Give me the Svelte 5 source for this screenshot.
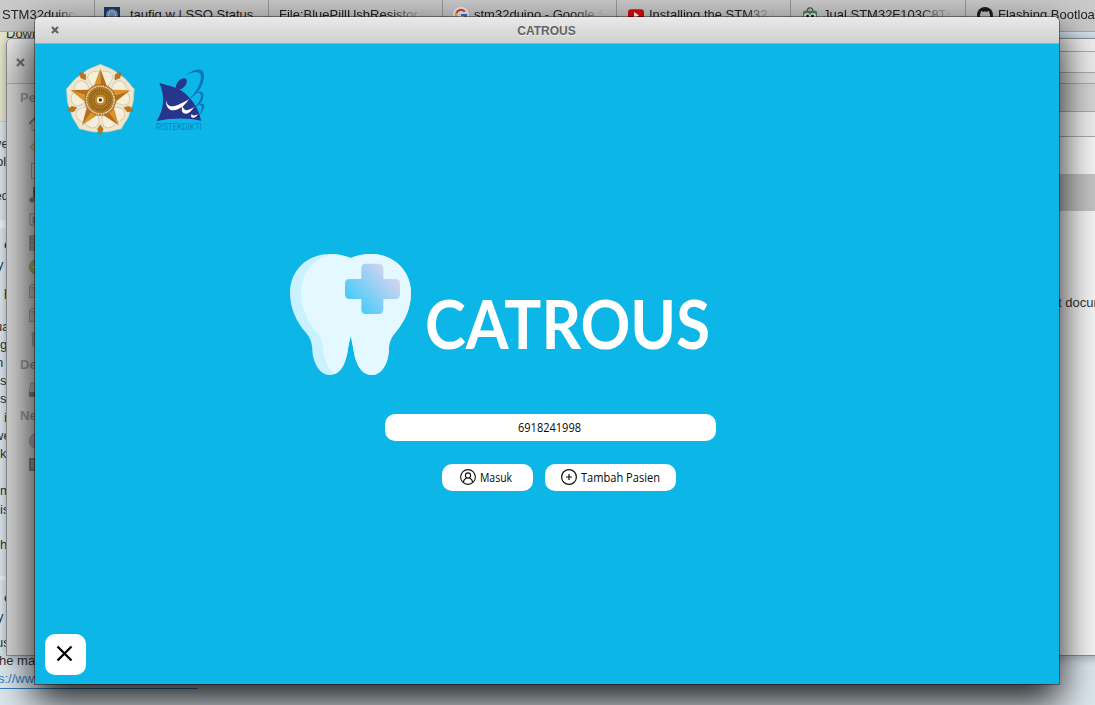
<script>
  const tabs = [
    { w: 95, pad: 2, icon: '', text: 'STM32duino', len: 74 },
    { w: 174, pad: 9, icon: 'sso', text: 'taufiq.w | SSO Status', len: 132 },
    { w: 173, pad: 9, icon: '', text: 'File:BluePillUsbResistor.jpg', len: 146 },
    { w: 173, pad: 9, icon: 'google', text: 'stm32duino - Google Search', len: 130 },
    { w: 173, pad: 10, icon: 'youtube', text: 'Installing the STM32 Library', len: 126 },
    { w: 174, pad: 10, icon: 'shop', text: 'Jual STM32F103C8T6 Board', len: 128 },
    { w: 174, pad: 10, icon: 'github', text: 'Flashing Bootloader', len: 150 }
  ];
  const lines = [
    { h: 30, t: 've', x: -5 }, { h: 18, t: 'ol', x: -4 }, { h: 34, t: 'ed', x: -5, c: 'small' },
    { h: 49, t: 'c', x: 4, c: 'bold' }, { h: 20, t: 'y', x: -3 }, { h: 27, t: 'p', x: 4 },
    { h: 35, t: 'ua', x: -5 }, { h: 18, t: 'g', x: 0 }, { h: 18, t: 'n', x: -4 },
    { h: 18, t: 's', x: 0 }, { h: 18, t: 's', x: 0 }, { h: 19, t: 'i', x: 4 },
    { h: 18, t: 'we', x: -6 }, { h: 18, t: 'k', x: 0 }, { h: 37, t: 'm', x: 0 },
    { h: 19, t: 'is', x: 0 }, { h: 35, t: 'he', x: 0 }, { h: 53, t: 'c', x: 4, c: 'bold' },
    { h: 19, t: 'y', x: -3 }, { h: 26, t: 'us', x: -4 }, { h: 18, t: 'he main', x: -1 },
    { h: 18, t: 's://www', x: -2, c: 'link' }
  ];
  const places = ['home', 'folder', 'doc', 'music', 'photo', 'film', 'down', 'box', 'box', 'trash'];
  const spokes = [0, 72, 144, 216, 288];
</script>

{#snippet fit(text, width, size, weight)}
  <svg class="fit" {width} height={Math.round(size * 1.3)} style:font-size="{size}px" style:font-weight={weight}>
    <text x="0" y={size} textLength={width} lengthAdjust="spacingAndGlyphs">{text}</text>
  </svg>
{/snippet}

{#snippet favicon(name)}
  <svg class="fav" viewBox="0 0 16 16">
    {#if name === 'sso'}
      <rect width="16" height="16" fill="#123e6c" /><circle cx="8" cy="8" r="6" fill="#7892b2" />
      <circle cx="8" cy="8" r="3.5" fill="none" stroke="#d5dce8" stroke-dasharray="2 1" />
    {:else if name === 'google'}
      <circle cx="8" cy="8" r="8" fill="#eee" />
      <path d="M3.4 6A5 5 0 0 1 11.8 4.6" fill="none" stroke="#dc4437" stroke-width="2.2" />
      <path d="M3.4 6A5 5 0 0 0 4 11" fill="none" stroke="#e9b32d" stroke-width="2.2" />
      <path d="M8 8H13A5 5 0 0 1 11 12" fill="none" stroke="#3774d9" stroke-width="2.2" />
    {:else if name === 'youtube'}
      <rect y="2.3" width="16" height="12" rx="3" fill="#e00909" /><path d="M6 5L11 8.3L6 11.6Z" fill="#fff" />
    {:else if name === 'shop'}
      <path d="M5 5C5-.5 11-.5 11 5" fill="none" stroke="#555" stroke-width="1.4" />
      <rect x="1" y="3.7" width="14" height="12" rx="1.5" fill="#4a8a4d" />
      <circle cx="5" cy="9" r="3" fill="#eee" /><circle cx="11" cy="9" r="3" fill="#eee" />
      <circle cx="5.5" cy="9" r="1.5" fill="#222" /><circle cx="10.5" cy="9" r="1.5" fill="#222" />
    {:else}
      <circle cx="8" cy="8" r="8" fill="#1d1d1d" />
      <path d="M4 4L6 4.8Q8 4.3 10 4.8L12 4Q12.6 5 12.3 6C15 10 11 12 8 12C5 12 1 10 3.7 6Q3.4 5 4 4Z" fill="#c4c4c4" />
    {/if}
  </svg>
{/snippet}

<div class="desktop">
  <section class="browser">
    <nav class="tabs">
      {#each tabs as tab}
        <div class="tab" style:width="{tab.w}px" style:padding-left="{tab.pad}px">
          {#if tab.icon}{@render favicon(tab.icon)}{/if}
          <span style:width="{tab.len}px">{tab.text}</span>
        </div>
      {/each}
    </nav>
    <div class="notice">Download</div>
    <div class="article">
      {#each lines as l}
        <div class="line {l.c ?? ''}" style:height="{l.h}px" style:margin-left="{l.x}px">{l.t}</div>
      {/each}
      <div class="rule"></div>
    </div>
  </section>

  <section class="files">
    <aside>
      <header><svg width="9" height="9" viewBox="0 0 9 9"><path d="M1 1L8 8M8 1L1 8" stroke="#747474" stroke-width="2.2" /></svg></header>
      <h4>Personal</h4>
      {#each places as p}
        <div class="place">
          <svg width="16" height="16" viewBox="0 0 16 16" fill="none" stroke="#8b8b8b">
            {#if p === 'home'}<path d="M0 9L8 1L16 9" stroke="#865d55" stroke-width="2" /><path d="M3 8V15H13V8" />
            {:else if p === 'folder'}<path d="M1 8L8 2L15 8L8 14Z" fill="#d4bb74" stroke="#9c8956" />
            {:else if p === 'doc'}<rect x="2.5" y=".5" width="12" height="15" />
            {:else if p === 'music'}<path d="M5 13V1L14 3" stroke="#555" stroke-width="2" /><circle cx="3" cy="13" r="2.5" fill="#555" />
            {:else if p === 'photo'}<rect x="1" y="3" width="14" height="11" stroke="#887f70" /><rect x="4" y="6" width="9" height="6" fill="#6d8494" />
            {:else if p === 'film'}<rect x="1" y="1" width="14" height="14" fill="#888" stroke="#555" /><path d="M3 1V15" stroke="#ccc" stroke-dasharray="2 2" />
            {:else if p === 'down'}<circle cx="8" cy="8" r="7.5" fill="#74b344" stroke="#678b50" /><path d="M4 8H12" stroke="#eee" stroke-width="2" />
            {:else if p === 'box'}<path d="M.5 4L2 1.5H14V14.5H.5Z" fill="#cdbda0" stroke="#998b77" /><path d="M1 5H15" />
            {:else}<path d="M3 2H14V15H4Z" fill="#9f9f9f" />{/if}
          </svg>
        </div>
      {/each}
      <h4 class="dev">Devices</h4>
      <div class="place"><svg width="16" height="16" viewBox="0 0 16 16"><path d="M2 1H14L16 11H0Z" fill="#bbb" stroke="#888" /><rect y="10" width="16" height="5" fill="#606060" /></svg></div>
      <h4 class="net">Network</h4>
      <div class="place"><svg width="16" height="16" viewBox="0 0 16 16"><circle cx="8" cy="8" r="7.5" fill="#b095cc" stroke="#80748b" /></svg></div>
      <div class="place"><svg width="16" height="16" viewBox="0 0 16 16"><rect x="1" y="2" width="15" height="11" fill="#888" stroke="#4e4e4e" stroke-width="1.6" /></svg></div>
    </aside>
    <div class="pane">
      <div class="r1"></div><div class="r2"></div><div class="r3"></div><div class="r4"></div>
      <div class="r5"></div><div class="r6"></div><div class="r7"></div>
      <p>t document</p>
    </div>
  </section>

  <main class="window">
    <header class="titlebar">
      <svg width="8" height="8" viewBox="0 0 8 8"><path d="M1 1L7 7M7 1L1 7" stroke="#606060" stroke-width="2.1" /></svg>
      <h1>CATROUS</h1>
    </header>
    <div class="content">
      <svg class="logos" width="150" height="72" viewBox="30 26 450 216">
        <g>
          {#each spokes as a}
            <g transform="rotate({a} 136 134)">
              <path d="M136 134L82 74C76 44 110 40 136 27C162 40 196 44 190 74Z" fill="#efe6cd" stroke="#d5caab" stroke-width="2" stroke-linejoin="round" />
              <path d="M117 92C89 80 93 48 123 48C130 48 133 52 136 52C139 52 142 48 149 48C179 48 183 80 155 92" fill="#f5eedb" stroke="#d6ccb0" stroke-width="3" />
            </g>
          {/each}
          {#each spokes as a}
            <path transform="rotate({a} 136 134)" d="M136 238L127 222L136 208L145 222Z" fill="#bd7414" stroke="#a65e18" />
          {/each}
          {#each spokes as a}
            <g transform="rotate({a} 136 134)">
              <path d="M136 40L113 102L136 120Z" fill="#d6942a" /><path d="M136 40L159 102L136 120Z" fill="#b86d16" />
            </g>
          {/each}
          <circle cx="136" cy="134" r="47" fill="#a65f16" /><circle cx="136" cy="134" r="42" fill="#b27d25" stroke="#f3e5c5" stroke-width="5" stroke-dasharray="3 2" />
          <circle cx="136" cy="134" r="29" fill="none" stroke="#8c5c1c" stroke-width="11" stroke-dasharray="3 3" />
          <circle cx="136" cy="134" r="19" fill="#c08829" stroke="#764710" stroke-width="3" stroke-dasharray="4 2" />
          <circle cx="136" cy="134" r="10" fill="#fff4db" /><circle cx="136" cy="134" r="5" fill="#54301c" />
        </g>
        <g>
          <path d="M313 82C341 92 367 94 388 112C410 132 432 157 438 196C397 187 350 188 305 197C326 163 332 126 313 82Z" fill="#27358c" />
          <ellipse cx="379" cy="86" rx="12" ry="21" transform="rotate(42 379 86)" fill="#27358c" />
          <path d="M391 62C418 36 447 36 447 61C446 93 427 117 399 133C424 112 438 86 438 62C436 44 412 48 391 62Z" fill="#0a72b8" />
          <path d="M421 114C437 103 449 111 444 128C439 144 427 154 414 160C429 147 438 134 438 122C438 112 430 111 421 114M432 148C445 140 451 148 446 160C442 170 437 176 432 178C439 168 441 161 440 154C439 149 436 148 432 148" fill="#0a72b8" />
          <path d="M333 134C335 149 345 156 359 152C374 149 388 139 402 132C389 151 373 164 356 165C340 166 332 151 333 134ZM383 151C385 164 394 168 407 161L417 155C408 170 397 178 387 174C379 170 379 160 383 151ZM410 175C413 182 420 182 429 177C423 187 414 190 408 184Z" fill="#fff" />
          <text x="303" y="224" font-family="Roboto" font-weight="300" font-size="27" textLength="137" lengthAdjust="spacingAndGlyphs" fill="#0a6cb2">RISTEKDIKTI</text>
        </g>
      </svg>

      <div class="brand">
        <svg width="121" height="121" viewBox="30 42 363 363">
          <defs>
            <linearGradient id="plus" x1="215" y1="205" x2="340" y2="90" gradientUnits="userSpaceOnUse">
              <stop stop-color="#3bcbfb" /><stop offset="1" stop-color="#e0d4ee" />
            </linearGradient>
          </defs>
          <path d="M212 54C190 46 168 42 148 42C82 42 30 92 30 158C30 205 50 246 77 277C92 295 96 310 97 330C99 371 121 405 148 405C181 405 196 374 203 333C206 314 208 304 212 288C216 304 218 314 221 333C228 374 244 405 277 405C305 405 327 370 327 322C328 302 337 288 348 275C376 242 393 205 393 157C393 92 340 42 275 42C252 42 232 46 212 54Z" fill="#caf1fe" />
          <path d="M212 54C196 48 180 44 165 43C105 48 63 96 63 158C63 205 83 246 110 277C124 294 129 310 130 330C132 362 145 390 165 402C186 393 197 368 203 333C206 314 208 304 212 288C216 304 218 314 221 333C228 374 244 405 277 405C305 405 327 370 327 322C328 302 337 288 348 275C376 242 393 205 393 157C393 92 340 42 275 42C252 42 232 46 212 54Z" fill="#e4f8ff" />
          <path d="M258 71H296Q310 71 310 85V117H346Q360 117 360 131V163Q360 177 346 177H310V208Q310 222 296 222H258Q244 222 244 208V177H209Q195 177 195 163V131Q195 117 209 117H244V85Q244 71 258 71Z" fill="url(#plus)" />
        </svg>
        {@render fit('CATROUS', 285, 67, 700)}
      </div>

      <div class="field">{@render fit('6918241998', 63, 12, 500)}</div>

      <div class="actions">
        <button class="login">
          <svg width="16" height="16" viewBox="0 0 16 16" fill="none" stroke="#111" stroke-width="1.1">
            <circle cx="8" cy="8" r="7.4" /><circle cx="8" cy="6.5" r="2.6" /><path d="M3.5 13.2C3.5 10.6 4.8 9.8 6.5 9M9.5 9C11.2 9.8 12.5 10.6 12.5 13.2" />
          </svg>
          {@render fit('Masuk', 32, 12, 500)}
        </button>
        <button class="add">
          <svg width="16" height="16" viewBox="0 0 16 16" fill="none" stroke="#111" stroke-width="1.2">
            <circle cx="8" cy="8" r="7.4" /><path d="M8 5V11M5 8H11" />
          </svg>
          {@render fit('Tambah Pasien', 79, 12, 500)}
        </button>
      </div>

      <button class="quit" aria-label="Close">
        <svg width="17" height="17" viewBox="0 0 17 17"><path d="M1.5 1.5L15.5 15.5M15.5 1.5L1.5 15.5" stroke="#000" stroke-width="2.3" /></svg>
      </button>
    </div>
  </main>
</div>

<style>
  * { box-sizing: border-box; }
  svg { display: block; flex: none; }
  .desktop { position: relative; width: 1095px; height: 705px; overflow: hidden; background: #dce7ef; font-family: "Liberation Sans", sans-serif; font-size: 13px; color: #333; }
  .browser { position: absolute; inset: 0; }
  .tabs { display: flex; height: 32px; background: #cacaca; border-bottom: 1px solid #aaa; overflow: hidden; }
  .tab { display: flex; flex: 0 0 auto; height: 31px; gap: 10px; border-right: 1px solid #999; align-items: center; color: #222; }
  .tab:not(:first-child) { margin-right: 1px; }
  .tab span { overflow: hidden; white-space: nowrap; height: 15px; line-height: 15px; mask-image: linear-gradient(90deg, #000 75%, transparent); margin-top: -3px; }
  .tab:nth-child(2) span { mask-image: none; }
  .fav { width: 16px; height: 16px; margin-top: -1px; margin-right: -5px; }
  .tab:nth-child(2) .fav { margin-right: 0; }
  .notice { height: 90px; padding: 0 0 0 6px; line-height: 4px; background: linear-gradient(90deg, #e9e8cf 0 100px, #d8e5ee 100px); border-bottom: 1px solid #d5d1b0; overflow: hidden; }
  .article { height: 583px; background: linear-gradient(#dde6ee 0 98px, #f4f4f4 98px 106px, #dce8ee 106px 454px, #f2f2f2 454px 458px, #dde7ee 458px); }
  .line { display: flex; align-items: flex-end; line-height: 16px; white-space: nowrap; }
  .small { font-size: 12px; }
  .bold { font-weight: 700; color: #164371; }
  .link { color: #347fc4; }
  .rule { width: 198px; height: 1px; background: #347fc4; margin-top: 1px; }
  .files { position: absolute; left: 6px; top: 38px; width: 1100px; height: 618px; display: flex; justify-content: space-between; background: #eee; border: 1px solid #8b8f92; border-radius: 6px 6px 0 0; box-shadow: 0 2px 10px #0004; overflow: hidden; }
  aside { width: 100px; background: #d6d6d6; }
  aside header { height: 45px; padding: 19px 0 0 9px; background: linear-gradient(#eee, #d2d2d2); border-bottom: 1px solid #aaa; }
  h4 { margin: 0; padding-left: 13px; height: 26px; line-height: 27px; font-size: 13px; color: #989898; }
  .place { height: 24px; padding: 5px 0 0 22px; }
  .place svg { opacity: .7; }
  .dev { margin-top: 1px; }
  .net { margin-top: 1px; }
  .pane { width: 70px; background: #f5f5f5; padding: 0; }
  .pane div { border-bottom: 1px solid #aaa; }
  .pane .r1 { height: 13px; background: #eee; }
  .pane .r2 { height: 21px; background: #ececec; }
  .pane .r3 { height: 11px; background: #ddd; }
  .pane .r4 { height: 28px; background: #d5d5d5; }
  .pane .r5 { height: 25px; background: #eee; }
  .pane .r6 { height: 37px; border: 0; }
  .pane .r7 { height: 37px; background: #c4c4c4; border: 0; }
  p { margin: 84px 0 0 23px; line-height: 16px; white-space: nowrap; }
  .window { position: absolute; left: 35px; top: 17px; width: 1024px; height: 667px; border-radius: 5px 5px 0 0; box-shadow: 0 0 0 1px #0006, 0 16px 38px 2px #000d; }
  .titlebar { display: grid; grid-template-columns: 32px 1fr 33px; align-items: center; height: 27px; padding-bottom: 1px; background: linear-gradient(#e9e9e9, #d0d0d0); border-bottom: 1px solid #aaa; border-radius: 5px 5px 0 0; }
  .titlebar svg { margin-left: 16px; }
  h1 { margin: 0; padding-top: 2px; font-size: 12px; line-height: 16px; color: #636363; text-align: center; text-shadow: 0 1px #eee; }
  .content { display: flex; flex-direction: column; height: 640px; background: #0cb6e6; }
  .logos { margin: 20px 0 0 30px; }
  .brand { display: flex; margin: 118px 0 0 255px; height: 121px; }
  .fit { font-family: Lato, "Open Sans", sans-serif; fill: #080808; overflow: visible; }
  .brand .fit { fill: #fff; margin: 28px 0 0 14px; }
  .field { display: flex; justify-content: center; width: 331px; height: 27px; margin: 39px 0 0 350px; padding: 6px 2px 0 0; background: #fff; border-radius: 10px; }
  .field .fit, button .fit { font-family: "Open Sans", sans-serif; }
  .actions { display: flex; gap: 12px; margin: 23px 0 0 407px; }
  button { display: flex; align-items: center; border: 0; padding: 0; background: #fff; border-radius: 10px; }
  .actions button { height: 27px; gap: 4px; padding-bottom: 1px; }
  .actions .fit { margin-top: 2px; }
  .actions .login { width: 91px; padding-left: 18px; }
  .actions .add { width: 131px; padding-left: 16px; }
  .quit { width: 41px; height: 41px; margin: auto 0 9px 10px; padding: 0 2px 2px 0; justify-content: center; border-radius: 10px; }
</style>
